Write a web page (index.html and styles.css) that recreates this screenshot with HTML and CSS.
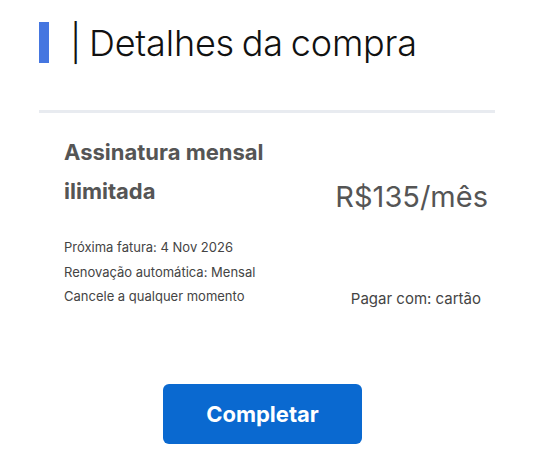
FILE: index.html
```html
<!DOCTYPE html>
<html lang="pt-BR">
<head>
  <meta charset="UTF-8" />
  <meta name="viewport" content="width=device-width, initial-scale=1.0"/>
  <title>Detalhes da compra</title>
  <link rel="stylesheet" href="styles.css">
</head>
<body>

  <div class="checkout">
    <div class="heading">
      <span class="mark"></span>
      <h2>| Detalhes da compra</h2>
    </div>

    <hr class="divider" />

    <div class="summary">
      <div class="plan">Assinatura mensal ilimitada</div>
      <div class="price">R$135/mês</div>

      <ul class="terms">
        <li>Próxima fatura: 4 Nov 2026</li>
        <li>Renovação automática: Mensal</li>
        <li>Cancele a qualquer momento</li>
      </ul>
      <div class="pay">Pagar com: cartão</div>
    </div>

    <div class="actions">
      <button>Completar</button>
    </div>
  </div>

</body>
</html>
```

FILE: styles.css
```css
body {
  font-family: Inter, 'Noto Sans', sans-serif;
  background: #ffffff;
  color: #4d4d4d;
  margin: 0;
}

.checkout {
  width: 456px;
  padding: 22px 0 0 39px;
}

.heading {
  display: flex;
  align-items: center;
  height: 41px;
}

.mark {
  width: 10px;
  height: 41px;
  background: #4576e0;
}

h2 {
  margin: 0 0 0 21px;
  font-size: 36px;
  font-weight: 300;
  color: #111;
  letter-spacing: -0.2px;
  word-spacing: -2px;
}

.divider {
  border: none;
  height: 3px;
  background: #e8ebf0;
  margin: 47px 0 0;
}

.summary {
  display: grid;
  grid-template-columns: 1fr auto;
  align-items: end;
  padding: 20px 7px 0 25px;
}

.plan {
  width: 230px;
  font-size: 22px;
  font-weight: 700;
  line-height: 39px;
  color: #555;
}

.price {
  justify-self: end;
  font-size: 29px;
  font-weight: 400;
  color: #555;
  margin-bottom: -3px;
}

.terms {
  list-style: none;
  margin: 24px 0 0;
  padding: 0;
  font-size: 13px;
  line-height: 24.5px;
  color: #444;
}

.pay {
  justify-self: end;
  font-size: 15px;
  color: #444;
  margin: 0 7px -2px 0;
  line-height: 24px;
}

.actions {
  padding: 75px 0 0 124px;
}

button {
  width: 199px;
  height: 60px;
  background: #0a69d0;
  color: #fff;
  border: none;
  border-radius: 6px;
  font-family: inherit;
  font-size: 22px;
  font-weight: 700;
  cursor: pointer;
}
```
